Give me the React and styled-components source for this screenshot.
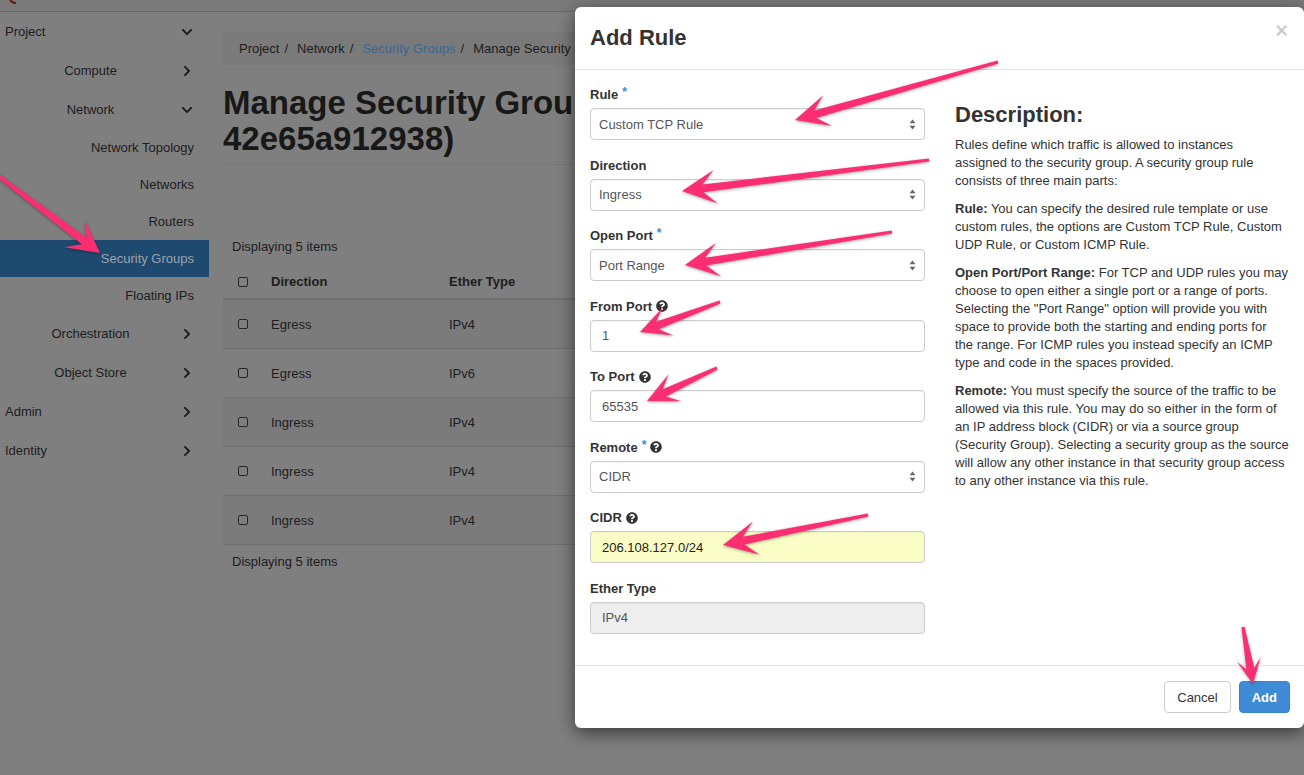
import React from 'react';
import styled, { createGlobalStyle } from 'styled-components';
import { FaChevronDown, FaChevronRight, FaQuestionCircle } from 'react-icons/fa';

// colours of the page as it shows through the modal backdrop
const DIM = {
  bg: '#7f7f7f',
  bar: '#7a7a7a',
  barLine: '#6a6a6a',
  text: '#1d1d1d',
  title: '#181818',
  crumbBg: '#7a7a7a',
  link: '#3b6791',
  activeBg: '#1f4a70',
  activeText: '#9aa3ad',
  stripe: '#7b7b7b',
  line: '#6f6f6f',
  rule: '#767676',
};

const GlobalStyle = createGlobalStyle`
  html, body {
    margin: 0;
    padding: 0;
  }
  body {
    font-family: "Liberation Sans", Arial, Helvetica, sans-serif;
    color: #333;
    background: ${DIM.bg};
    overflow: hidden;
  }
  * {
    box-sizing: border-box;
  }
`;

const Page = styled.div`
  position: relative;
  width: 1304px;
  height: 775px;
  overflow: hidden;
  background: ${DIM.bg};
  color: ${DIM.text};
`;

const TopBar = styled.header`
  height: 12px;
  background: ${DIM.bar};
  border-bottom: 1px solid ${DIM.barLine};
  padding-left: 7px;
  overflow: hidden;

  svg {
    display: block;
  }
`;

const Layout = styled.div`
  display: flex;
`;

/* ---------- sidebar ---------- */

const Sidebar = styled.nav`
  width: 209px;
  flex-shrink: 0;
`;

const NavRow = styled.div`
  display: flex;
  align-items: center;
  height: ${p => (p.$level === 3 ? 37 : 39)}px;
  padding-left: ${p => (p.$level === 1 ? 5 : 0)}px;
  padding-right: ${p => (p.$level === 3 ? 15 : 16)}px;
  font-size: 13px;
  color: ${p => (p.$active ? DIM.activeText : DIM.text)};
  background: ${p => (p.$active ? DIM.activeBg : 'transparent')};

  svg {
    width: 12px;
    height: 12px;
    flex-shrink: 0;
    color: ${DIM.text};
  }
`;

const NavLabel = styled.span`
  flex: 1;
  white-space: nowrap;
  text-align: ${p => (p.$level === 1 ? 'left' : p.$level === 2 ? 'center' : 'right')};
`;

/* ---------- main content ---------- */

const Main = styled.main`
  flex: 1;
  min-width: 0;
  padding: 20px 0 0 14px;
`;

const Breadcrumb = styled.ol`
  display: flex;
  align-items: center;
  height: 33px;
  margin: 0;
  padding: 0 16px;
  list-style: none;
  background: ${DIM.crumbBg};
  border-radius: 4px;
  font-size: 13px;
  white-space: nowrap;
  overflow: hidden;

  li + li::before {
    content: "/";
    color: ${DIM.text};
    padding: 0 9px 0 5px;
  }
`;

const Crumb = styled.li`
  color: ${p => (p.$link ? DIM.link : DIM.text)};
`;

const PageHeader = styled.div`
  margin-top: 20px;
  padding-bottom: 7px;
  border-bottom: 1px solid ${DIM.rule};
`;

const Title = styled.h1`
  margin: 0;
  font-size: 33px;
  line-height: 36px;
  font-weight: bold;
  color: ${DIM.title};

  span {
    display: block;
    white-space: nowrap;
  }
`;

const Caption = styled.div`
  font-size: 13px;
  line-height: 18px;
  padding-left: 9px;
  margin-top: ${p => p.$top}px;
`;

const Grid = styled.div`
  margin-top: 9px;
  font-size: 13px;
`;

const GridRow = styled.div`
  display: grid;
  grid-template-columns: 48px 178px 1fr;
  align-items: center;
  height: ${p => (p.$head ? 35 : 49)}px;
  border-bottom: ${p => (p.$head ? 2 : 1)}px solid ${DIM.line};
  font-weight: ${p => (p.$head ? 'bold' : 'normal')};
  background: ${p => (p.$striped ? DIM.stripe : 'transparent')};
`;

const CheckCell = styled.div`
  padding-left: 15px;
`;

const Check = styled.span`
  display: block;
  width: 10px;
  height: 10px;
  border: 1px solid #262626;
  border-radius: 2px;
  background: ${DIM.bg};
`;

/* ---------- modal ---------- */

const Modal = styled.section`
  position: absolute;
  left: 575px;
  top: 7px;
  z-index: 20;
  width: 729px;
  color: #333;
  background: #fff;
  border-radius: 6px;
  box-shadow: 0 5px 18px rgba(0, 0, 0, 0.55);
`;

const ModalHeader = styled.div`
  display: flex;
  justify-content: space-between;
  align-items: flex-start;
  padding: 15px 16px 15px 15px;
  border-bottom: 1px solid #e5e5e5;

  h3 {
    margin: 0;
    font-size: 22px;
    line-height: 32px;
    font-weight: bold;
    color: #333;
  }
`;

const Close = styled.span`
  font-size: 22px;
  line-height: 20px;
  font-weight: bold;
  color: #000;
  opacity: 0.2;
  margin-top: -1px;
`;

const ModalBody = styled.div`
  display: grid;
  grid-template-columns: 335px 350px;
  column-gap: 30px;
  padding: 16px 15px 15px;
`;

const FormGroup = styled.div`
  margin-bottom: 16.5px;
`;

const Label = styled.div`
  display: flex;
  align-items: center;
  font-size: 13px;
  line-height: 17px;
  font-weight: bold;
  color: #333;
  margin-bottom: 5px;

  svg {
    width: 12px;
    height: 12px;
    margin-left: 4px;
    color: #333;
  }
`;

const Required = styled.sup`
  color: #3b8bd3;
  font-size: 12px;
  line-height: 1;
  margin-left: 4px;
  align-self: flex-start;
`;

const Control = styled.div`
  display: flex;
  align-items: center;
  justify-content: space-between;
  height: 32px;
  padding: 0 ${p => (p.$select ? '8px 0 8px' : '11px')};
  border: 1px solid #ccc;
  border-radius: 4px;
  font-size: 13px;
  color: ${p => (p.$variant === 'autofill' ? '#222' : '#555')};
  background: ${p =>
    p.$variant === 'autofill' ? '#fbfdc6' : p.$variant === 'disabled' ? '#eeeeee' : '#fff'};
  box-shadow: inset 0 1px 1px rgba(0, 0, 0, 0.04);
`;

const Description = styled.div`
  font-size: 13px;
  line-height: 18px;
  color: #333;

  h3 {
    margin: 16px 0 8px;
    font-size: 22px;
    line-height: 26px;
    font-weight: bold;
  }

  p {
    margin: 0 0 10px;
  }

  span {
    display: block;
    white-space: nowrap;
  }
`;

const ModalFooter = styled.div`
  display: flex;
  justify-content: flex-end;
  gap: 8px;
  padding: 15px 14px 15px 15px;
  border-top: 1px solid #e5e5e5;
`;

const Button = styled.button`
  height: 32px;
  padding: 0 12px;
  border-radius: 4px;
  font-family: inherit;
  font-size: 13px;
  font-weight: ${p => (p.$primary ? 'bold' : 'normal')};
  color: ${p => (p.$primary ? '#fff' : '#333')};
  background: ${p => (p.$primary ? '#3f8bd6' : '#fff')};
  border: 1px solid ${p => (p.$primary ? '#3784cf' : '#ccc')};
`;

const Annotations = styled.svg`
  position: absolute;
  top: 0;
  left: 0;
  z-index: 30;
  pointer-events: none;
  filter: drop-shadow(0 1px 1.5px rgba(0, 0, 0, 0.35));
`;

/* ---------- data ---------- */

const NAV = [
  { label: 'Project', level: 1, icon: 'down' },
  { label: 'Compute', level: 2, icon: 'right' },
  { label: 'Network', level: 2, icon: 'down' },
  { label: 'Network Topology', level: 3 },
  { label: 'Networks', level: 3 },
  { label: 'Routers', level: 3 },
  { label: 'Security Groups', level: 3, active: true },
  { label: 'Floating IPs', level: 3 },
  { label: 'Orchestration', level: 2, icon: 'right' },
  { label: 'Object Store', level: 2, icon: 'right' },
  { label: 'Admin', level: 1, icon: 'right' },
  { label: 'Identity', level: 1, icon: 'right' },
];

const RULES = [
  ['Egress', 'IPv4'],
  ['Egress', 'IPv6'],
  ['Ingress', 'IPv4'],
  ['Ingress', 'IPv4'],
  ['Ingress', 'IPv4'],
];

const FIELDS = [
  { label: 'Rule', required: true, value: 'Custom TCP Rule', select: true },
  { label: 'Direction', value: 'Ingress', select: true },
  { label: 'Open Port', required: true, value: 'Port Range', select: true },
  { label: 'From Port', help: true, value: '1' },
  { label: 'To Port', help: true, value: '65535' },
  { label: 'Remote', required: true, help: true, value: 'CIDR', select: true },
  { label: 'CIDR', help: true, value: '206.108.127.0/24', variant: 'autofill' },
  { label: 'Ether Type', value: 'IPv4', variant: 'disabled' },
];

const HELP = [
  {
    lines: [
      'Rules define which traffic is allowed to instances',
      'assigned to the security group. A security group rule',
      'consists of three main parts:',
    ],
  },
  {
    term: 'Rule:',
    lines: [
      ' You can specify the desired rule template or use',
      'custom rules, the options are Custom TCP Rule, Custom',
      'UDP Rule, or Custom ICMP Rule.',
    ],
  },
  {
    term: 'Open Port/Port Range:',
    lines: [
      ' For TCP and UDP rules you may',
      'choose to open either a single port or a range of ports.',
      'Selecting the "Port Range" option will provide you with',
      'space to provide both the starting and ending ports for',
      'the range. For ICMP rules you instead specify an ICMP',
      'type and code in the spaces provided.',
    ],
  },
  {
    term: 'Remote:',
    lines: [
      ' You must specify the source of the traffic to be',
      'allowed via this rule. You may do so either in the form of',
      'an IP address block (CIDR) or via a source group',
      '(Security Group). Selecting a security group as the source',
      'will allow any other instance in that security group access',
      'to any other instance via this rule.',
    ],
  },
];

const ARROWS = [
  { from: [-12, 168], to: [100, 253], head: 32, wing: 17 },
  { from: [998, 62], to: [795, 120], head: 34, wing: 16 },
  { from: [929, 160], to: [682, 191], head: 34, wing: 17 },
  { from: [892, 232], to: [685, 265], head: 34, wing: 17 },
  { from: [720, 302], to: [640, 332], head: 30, wing: 15 },
  { from: [717, 368], to: [647, 401], head: 31, wing: 15 },
  { from: [868, 515], to: [723, 545], head: 34, wing: 17 },
  { from: [1243, 627], to: [1253, 684], head: 25, wing: 12 },
];

function arrowPoints({ from, to, head, wing }) {
  const [tx, ty] = from;
  const [px, py] = to;
  const len = Math.hypot(px - tx, py - ty);
  const ux = (px - tx) / len;
  const uy = (py - ty) / len;
  const nx = -uy;
  const ny = ux;
  const notch = [px - ux * head * 0.62, py - uy * head * 0.62];
  const base = [px - ux * head, py - uy * head];
  const pt = (p, w) => `${(p[0] + nx * w).toFixed(1)},${(p[1] + ny * w).toFixed(1)}`;
  return [
    pt([tx, ty], 1.5),
    pt(notch, 4),
    pt(base, wing),
    pt([px, py], 0),
    pt(base, -wing),
    pt(notch, -4),
    pt([tx, ty], -1.5),
  ].join(' ');
}

function SelectArrows() {
  return (
    <svg width="7" height="11" viewBox="0 0 7 11">
      <path d="M3.5 0.5 L6.5 4.2 L0.5 4.2 Z M0.5 6.8 L6.5 6.8 L3.5 10.5 Z" fill="#666" />
    </svg>
  );
}

function App() {
  return (
    <>
      <GlobalStyle />
      <Page>
        <TopBar>
          <svg width="16" height="11" viewBox="0 0 16 11">
            <path d="M2 -3 Q3.5 3 9 3" stroke="#6e1519" strokeWidth="2" fill="none" />
          </svg>
        </TopBar>

        <Layout>
          <Sidebar>
            {NAV.map(item => (
              <NavRow key={item.label} $level={item.level} $active={item.active}>
                <NavLabel $level={item.level}>{item.label}</NavLabel>
                {item.icon === 'down' && <FaChevronDown />}
                {item.icon === 'right' && <FaChevronRight />}
              </NavRow>
            ))}
          </Sidebar>

          <Main>
            <Breadcrumb>
              <Crumb>Project</Crumb>
              <Crumb>Network</Crumb>
              <Crumb $link>Security Groups</Crumb>
              <Crumb>Manage Security Group Rules: default</Crumb>
            </Breadcrumb>

            <PageHeader>
              <Title>
                <span>Manage Security Group Rules: default (b7c1f0e2-5d3a-4c8e-9f61-</span>
                <span>42e65a912938)</span>
              </Title>
            </PageHeader>

            <Caption $top={73}>Displaying 5 items</Caption>
            <Grid>
              <GridRow $head>
                <CheckCell><Check /></CheckCell>
                <div>Direction</div>
                <div>Ether Type</div>
              </GridRow>
              {RULES.map(([dir, ether], i) => (
                <GridRow key={i} $striped={i % 2 === 0}>
                  <CheckCell><Check /></CheckCell>
                  <div>{dir}</div>
                  <div>{ether}</div>
                </GridRow>
              ))}
            </Grid>
            <Caption $top={8}>Displaying 5 items</Caption>
          </Main>
        </Layout>

        <Modal>
          <ModalHeader>
            <h3>Add Rule</h3>
            <Close>×</Close>
          </ModalHeader>

          <ModalBody>
            <div>
              {FIELDS.map(f => (
                <FormGroup key={f.label}>
                  <Label>
                    {f.label}
                    {f.required && <Required>*</Required>}
                    {f.help && <FaQuestionCircle />}
                  </Label>
                  <Control $select={f.select} $variant={f.variant}>
                    {f.value}
                    {f.select && <SelectArrows />}
                  </Control>
                </FormGroup>
              ))}
            </div>

            <Description>
              <h3>Description:</h3>
              {HELP.map((para, i) => (
                <p key={i}>
                  {para.lines.map((line, j) => (
                    <span key={j}>
                      {j === 0 && para.term && <b>{para.term}</b>}
                      {line}
                    </span>
                  ))}
                </p>
              ))}
            </Description>
          </ModalBody>

          <ModalFooter>
            <Button>Cancel</Button>
            <Button $primary>Add</Button>
          </ModalFooter>
        </Modal>

        <Annotations width="1304" height="775" viewBox="0 0 1304 775">
          {ARROWS.map((a, i) => (
            <polygon key={i} points={arrowPoints(a)} fill="#fc2e72" strokeLinejoin="round" />
          ))}
        </Annotations>
      </Page>
    </>
  );
}

export default App;
